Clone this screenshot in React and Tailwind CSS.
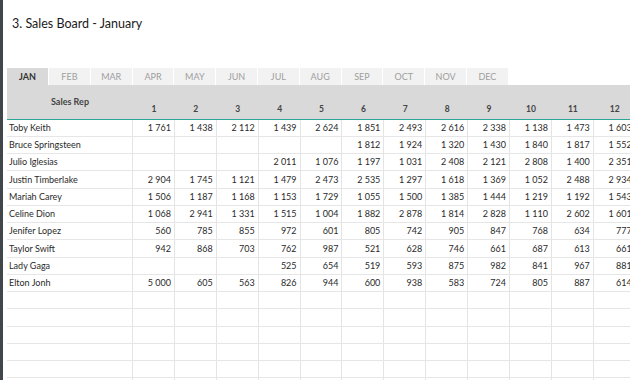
import React from "react";

const months = ["JAN","FEB","MAR","APR","MAY","JUN","JUL","AUG","SEP","OCT","NOV","DEC"];

const rows = [
  ["Toby Keith", ["1 761","1 438","2 112","1 439","2 624","1 851","2 493","2 616","2 338","1 138","1 473","1 603"]],
  ["Bruce Springsteen", ["","","","","","1 812","1 924","1 320","1 430","1 840","1 817","1 552"]],
  ["Julio Iglesias", ["","","","2 011","1 076","1 197","1 031","2 408","2 121","2 808","1 400","2 351"]],
  ["Justin Timberlake", ["2 904","1 745","1 121","1 479","2 473","2 535","1 297","1 618","1 369","1 052","2 488","2 934"]],
  ["Mariah Carey", ["1 506","1 187","1 168","1 153","1 729","1 055","1 500","1 385","1 444","1 219","1 192","1 543"]],
  ["Celine Dion", ["1 068","2 941","1 331","1 515","1 004","1 882","2 878","1 814","2 828","1 110","2 602","1 601"]],
  ["Jenifer Lopez", ["560","785","855","972","601","805","742","905","847","768","634","777"]],
  ["Taylor Swift", ["942","868","703","762","987","521","628","746","661","687","613","661"]],
  ["Lady Gaga", ["","","","525","654","519","593","875","982","841","967","881"]],
  ["Elton Jonh", ["5 000","605","563","826","944","600","938","583","724","805","887","614"]],
];

const empty = Array.from({ length: 6 }, () => ["", Array(12).fill("")]);
const allRows = [...rows, ...empty];

export default function App() {
  return (
    <div
      className="w-[630px] h-[380px] overflow-hidden bg-white flex"
      style={{ fontFamily: "Lato, 'Open Sans', sans-serif" }}
    >
      <div className="w-[3px] shrink-0 bg-[#41464b]" />
      <div className="flex-1 min-w-0 flex flex-col pl-[4px] overflow-hidden">
        <div className="h-[68px] shrink-0 pt-[16px] pl-[5px] text-[12.5px] text-[#1a1a1a] leading-[16px]">
          3. Sales Board - January
        </div>
        <div className="flex h-[17px] shrink-0 gap-[1px]">
          {months.map((m, i) => (
            <div
              key={m}
              className={
                i === 0
                  ? "w-[41px] shrink-0 bg-[#d9d9d9] text-[#333] font-bold text-[9px] flex items-center justify-center"
                  : "w-[40.8px] shrink-0 bg-[#f2f2f2] text-[#9e9e9e] text-[9px] flex items-center justify-center"
              }
            >
              {m}
            </div>
          ))}
        </div>
        <div className="grid grid-cols-[126px_repeat(12,41.9px)] w-max h-[34.5px] shrink-0 bg-[#d9d9d9] border-b-[1.5px] border-[#2aa596] text-[8.5px] font-bold text-[#444]">
          <div className="flex items-center justify-center pb-[1px] text-[9px]">Sales Rep</div>
          {Array.from({ length: 12 }, (_, i) => (
            <div key={i} className="flex items-end justify-center pb-[3px]">{i + 1}</div>
          ))}
        </div>
        {allRows.map(([name, vals], r) => (
          <div
            key={r}
            className="grid grid-cols-[126px_repeat(12,41.9px)] w-max h-[17.27px] shrink-0 border-b-[1.5px] border-[#e6e6e6] text-[9px] text-[#2a2a2a]"
          >
            <div className="flex items-center pl-[2px] border-r border-[#e4e4e4] whitespace-nowrap">{name}</div>
            {vals.map((v, c) => (
              <div
                key={c}
                className="flex items-center justify-end pr-[3px] border-r border-[#e4e4e4] whitespace-nowrap"
              >
                {v}
              </div>
            ))}
          </div>
        ))}
      </div>
    </div>
  );
}
